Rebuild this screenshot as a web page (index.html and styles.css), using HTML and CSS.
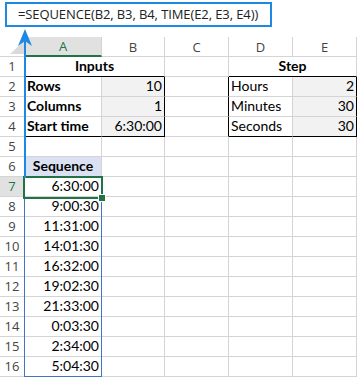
FILE: index.html
```html
<!DOCTYPE html>
<html lang="en">
<head>
    <meta charset="UTF-8">
    <title>SEQUENCE with TIME</title>
    <link rel="stylesheet" href="styles.css">
</head>
<body>
    <div class="sheet">
        <div class="formula-bar">
            <div class="formula">=SEQUENCE(B2, B3, B4, TIME(E2, E3, E4))</div>
        </div>

        <div class="grid">
            <!-- column headers -->
            <div class="c corner">
                <svg width="14" height="13" viewBox="0 0 14 13"><path d="M14 0 L14 13 L0 13 Z" fill="#dadada"/></svg>
            </div>
            <div class="c h active">A</div>
            <div class="c h">B</div>
            <div class="c h">C</div>
            <div class="c h">D</div>
            <div class="c h">E</div>

            <!-- 1 -->
            <div class="c r">1</div>
            <div class="c span2 b ctr bb">Inputs</div>
            <div class="c"></div>
            <div class="c span2 b ctr bb">Step</div>

            <!-- 2 -->
            <div class="c r br">2</div>
            <div class="c b">Rows</div>
            <div class="c num fill br">10</div>
            <div class="c br"></div>
            <div class="c">Hours</div>
            <div class="c num fill br">2</div>

            <!-- 3 -->
            <div class="c r br">3</div>
            <div class="c b">Columns</div>
            <div class="c num fill br">1</div>
            <div class="c br"></div>
            <div class="c">Minutes</div>
            <div class="c num fill br">30</div>

            <!-- 4 -->
            <div class="c r br">4</div>
            <div class="c b bb">Start time</div>
            <div class="c num fill br bb">6:30:00</div>
            <div class="c br"></div>
            <div class="c bb">Seconds</div>
            <div class="c num fill br bb">30</div>

            <!-- 5 -->
            <div class="c r">5</div>
            <div class="c"></div><div class="c"></div><div class="c"></div><div class="c"></div><div class="c"></div>

            <!-- 6 -->
            <div class="c r">6</div>
            <div class="c b ctr seq">Sequence</div>
            <div class="c"></div><div class="c"></div><div class="c"></div><div class="c"></div>

            <!-- 7..16 spill range -->
            <div class="c r active">7</div>
            <div class="c num">6:30:00</div>
            <div class="c"></div><div class="c"></div><div class="c"></div><div class="c"></div>

            <div class="c r">8</div>
            <div class="c num">9:00:30</div>
            <div class="c"></div><div class="c"></div><div class="c"></div><div class="c"></div>

            <div class="c r">9</div>
            <div class="c num">11:31:00</div>
            <div class="c"></div><div class="c"></div><div class="c"></div><div class="c"></div>

            <div class="c r">10</div>
            <div class="c num">14:01:30</div>
            <div class="c"></div><div class="c"></div><div class="c"></div><div class="c"></div>

            <div class="c r">11</div>
            <div class="c num">16:32:00</div>
            <div class="c"></div><div class="c"></div><div class="c"></div><div class="c"></div>

            <div class="c r">12</div>
            <div class="c num">19:02:30</div>
            <div class="c"></div><div class="c"></div><div class="c"></div><div class="c"></div>

            <div class="c r">13</div>
            <div class="c num">21:33:00</div>
            <div class="c"></div><div class="c"></div><div class="c"></div><div class="c"></div>

            <div class="c r">14</div>
            <div class="c num">0:03:30</div>
            <div class="c"></div><div class="c"></div><div class="c"></div><div class="c"></div>

            <div class="c r">15</div>
            <div class="c num">2:34:00</div>
            <div class="c"></div><div class="c"></div><div class="c"></div><div class="c"></div>

            <div class="c r">16</div>
            <div class="c num">5:04:30</div>
            <div class="c"></div><div class="c"></div><div class="c"></div><div class="c"></div>

            <div class="spill"></div>
            <div class="selection"></div>
            <div class="handle"></div>
        </div>

        <svg class="arrow" width="40" height="180" viewBox="0 0 40 180">
            <rect x="24" y="38" width="2" height="140" fill="#1e88e5"/>
            <path d="M25 29 L32 46 L25 41 L18 46 Z" fill="#1e88e5"/>
        </svg>
    </div>
</body>
</html>
```

FILE: styles.css
```css
body {
    margin: 0;
    background: #fff;
}
.sheet {
    position: relative;
    width: 358px;
    height: 378px;
    overflow: hidden;
}
.formula-bar {
    height: 37px;
    padding: 2px 0 0 5px;
    box-sizing: border-box;
}
.formula {
    width: 267px;
    height: 25px;
    box-sizing: border-box;
    border: 2px solid #1e88e5;
    padding: 0 0 1px 11px;
    display: flex;
    align-items: center;
    font-family: "Open Sans", sans-serif;
    font-size: 13px;
    letter-spacing: -0.1px;
    color: #222;
    white-space: nowrap;
}
.grid {
    position: relative;
    display: grid;
    grid-template-columns: 25px 77px 63px 64px 64px 64px;
    grid-auto-rows: 20px;
    font-family: Lato, "Liberation Sans", sans-serif;
    font-size: 14px;
    color: #000;
}
.c {
    box-sizing: border-box;
    border-right: 1px solid #d4d4d4;
    border-bottom: 1px solid #d4d4d4;
    display: flex;
    align-items: flex-end;
    padding: 0 2px 2px 2px;
    white-space: nowrap;
    line-height: 16px;
}
.corner {
    justify-content: flex-end;
    padding: 0 0 2px 0;
}
.h, .r {
    font-family: "Open Sans", sans-serif;
    font-size: 13px;
    color: #444;
    justify-content: center;
}
.h {
    align-items: center;
    padding: 0;
}
.h.active {
    background: #e1e1e1;
    color: #217346;
    border-bottom: 2px solid #217346;
}
.r.active {
    background: #e1e1e1;
    color: #217346;
}
.span2 {
    grid-column: span 2;
}
.b {
    font-weight: bold;
}
.ctr {
    justify-content: center;
}
.num {
    justify-content: flex-end;
}
.fill {
    background: #f2f2f2;
}
.seq {
    background: #d9e1f2;
}
.bb {
    border-bottom-color: #000;
}
.br {
    border-right-color: #000;
}
.spill {
    position: absolute;
    left: 24px;
    top: 139px;
    width: 78px;
    height: 201px;
    box-sizing: border-box;
    border: 1px solid #4472c4;
}
.selection {
    position: absolute;
    left: 23px;
    top: 139px;
    width: 80px;
    height: 23px;
    box-sizing: border-box;
    border: 2px solid #217346;
}
.handle {
    position: absolute;
    left: 99px;
    top: 158px;
    width: 6px;
    height: 6px;
    background: #217346;
    outline: 1px solid #fff;
}
.arrow {
    position: absolute;
    left: 0;
    top: 0;
}
```
